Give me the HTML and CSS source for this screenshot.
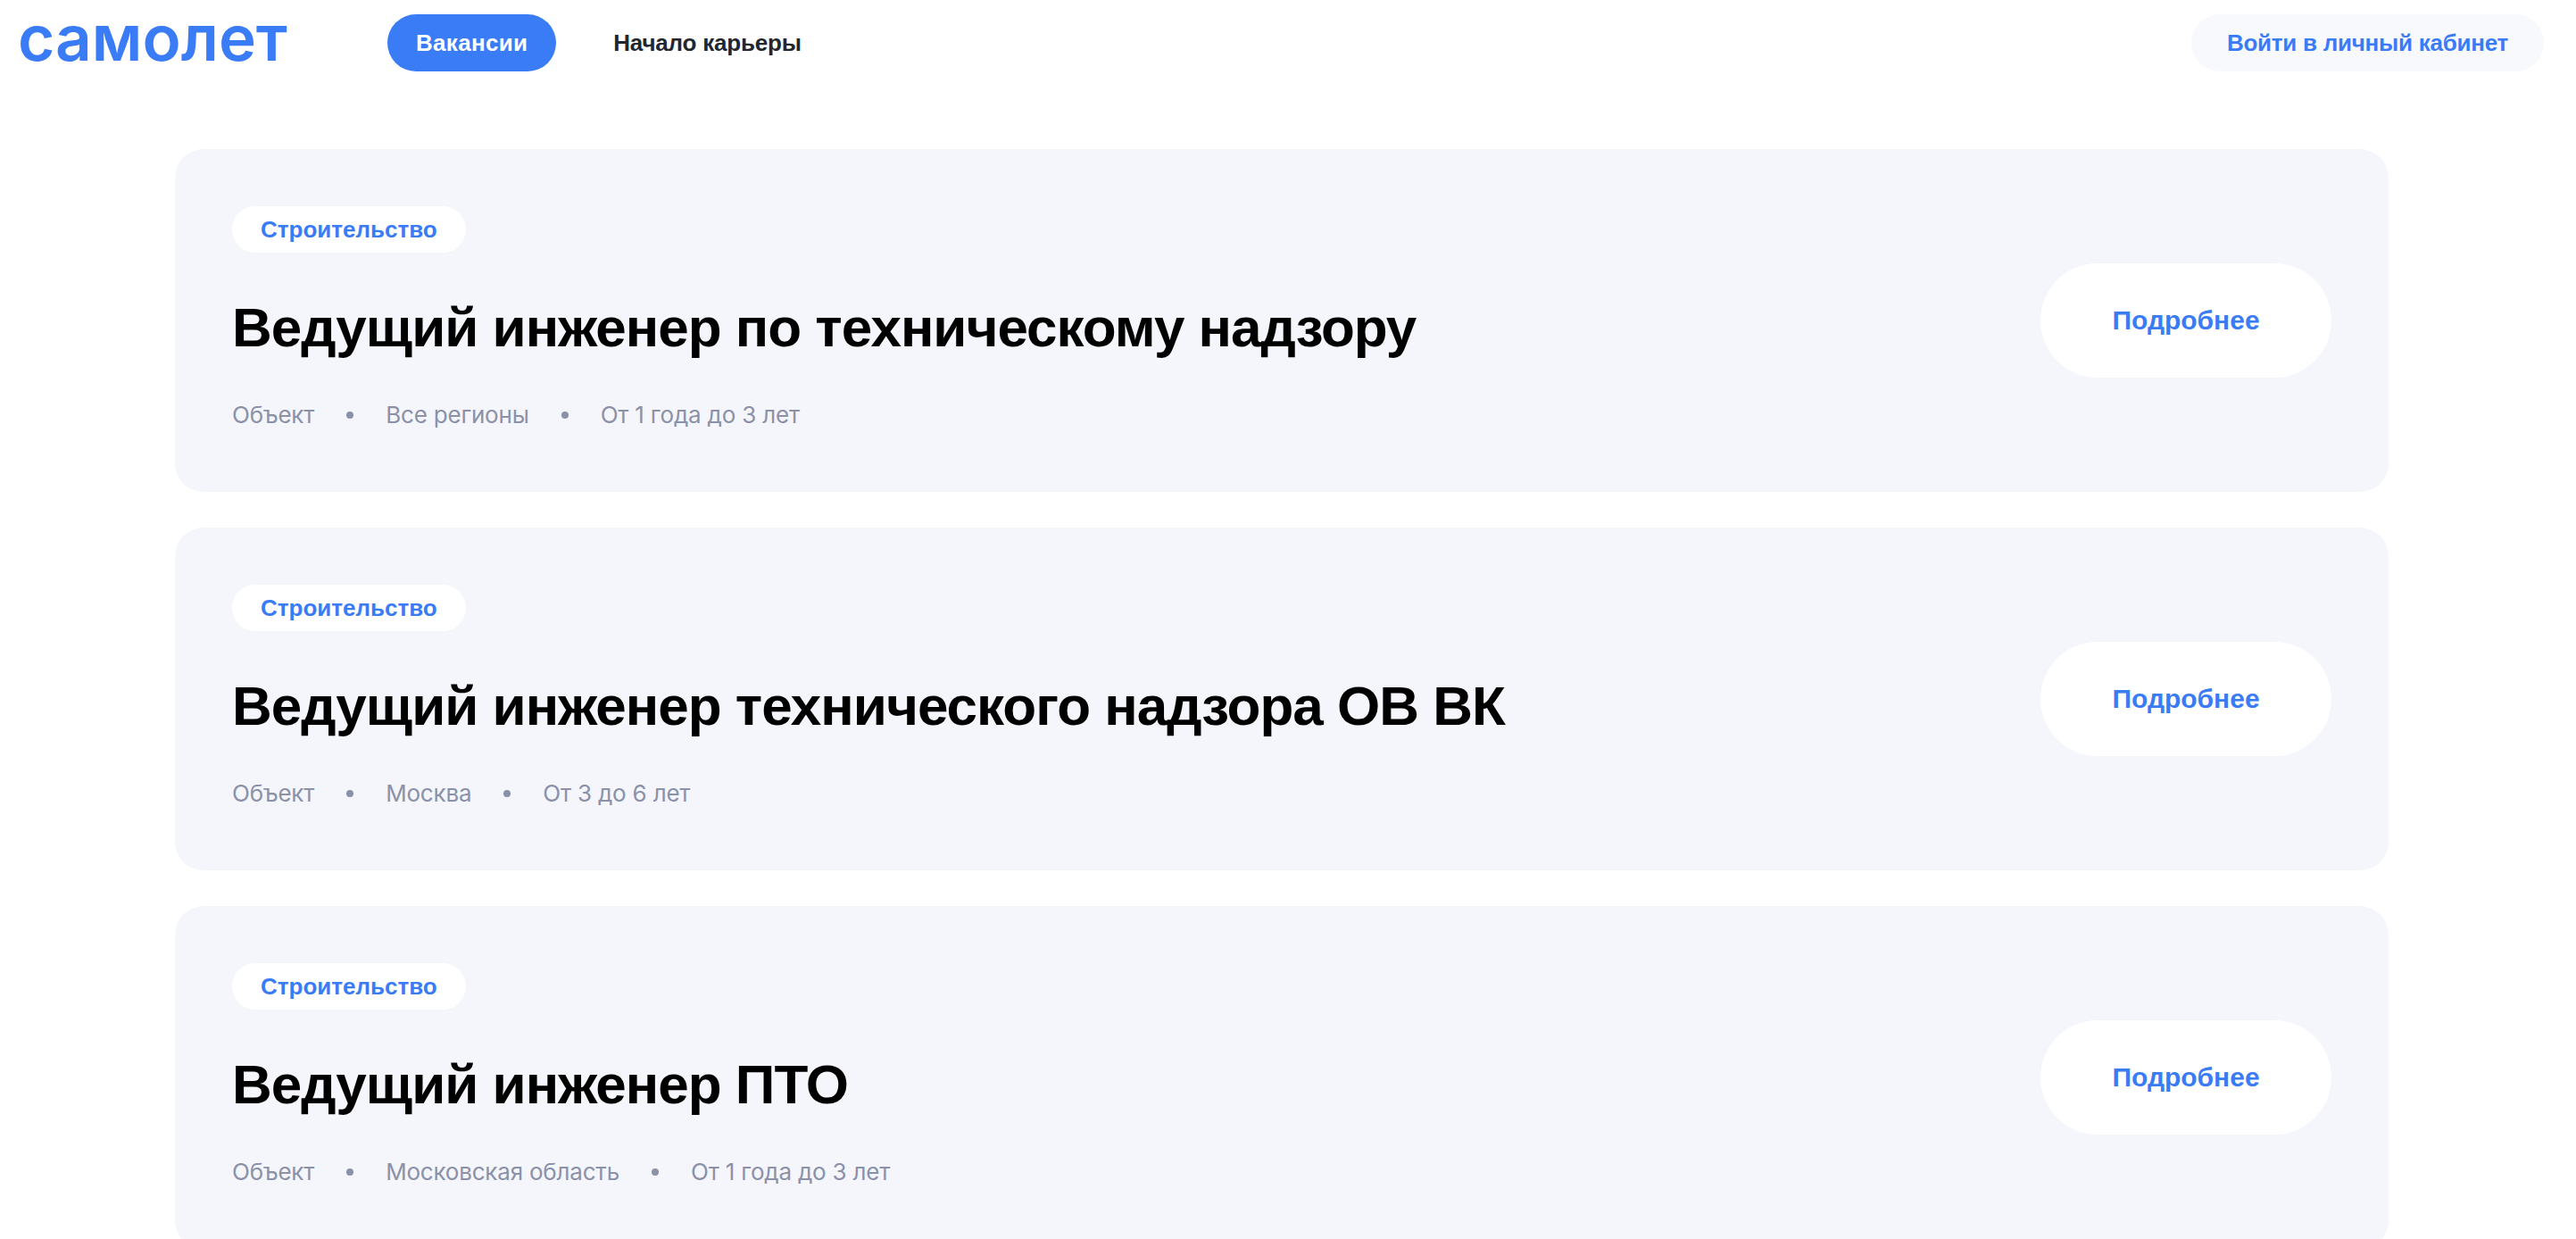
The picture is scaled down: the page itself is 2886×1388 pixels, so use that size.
FILE: index.html
```html
<!DOCTYPE html>
<html lang="ru">
<head>
	<meta charset="UTF-8">
	<title>Вакансии</title>
	<link rel="stylesheet" href="styles.css">
</head>
<body>
	<header class="header">
		<a class="logo">самолет</a>
		<nav class="nav">
			<a class="nav-item current">Вакансии</a>
			<a class="nav-item">Начало карьеры</a>
		</nav>
		<a class="login">Войти в личный кабинет</a>
	</header>
	<main class="list">
		<section class="card">
			<div class="card-info">
				<span class="tag">Строительство</span>
				<h2 class="title">Ведущий инженер по техническому надзору</h2>
				<ul class="meta">
					<li>Объект</li>
					<li class="dot"></li>
					<li>Все регионы</li>
					<li class="dot"></li>
					<li>От 1 года до 3 лет</li>
				</ul>
			</div>
			<a class="more">Подробнее</a>
		</section>
		<section class="card">
			<div class="card-info">
				<span class="tag">Строительство</span>
				<h2 class="title">Ведущий инженер технического надзора ОВ ВК</h2>
				<ul class="meta">
					<li>Объект</li>
					<li class="dot"></li>
					<li>Москва</li>
					<li class="dot"></li>
					<li>От 3 до 6 лет</li>
				</ul>
			</div>
			<a class="more">Подробнее</a>
		</section>
		<section class="card">
			<div class="card-info">
				<span class="tag">Строительство</span>
				<h2 class="title">Ведущий инженер ПТО</h2>
				<ul class="meta">
					<li>Объект</li>
					<li class="dot"></li>
					<li>Московская область</li>
					<li class="dot"></li>
					<li>От 1 года до 3 лет</li>
				</ul>
			</div>
			<a class="more">Подробнее</a>
		</section>
	</main>
</body>
</html>
```

FILE: styles.css
```css
/*css reset*/
html,body,div,ul,li,h2,main,header,nav,section{
	padding: 0;
	margin: 0;
}
html,body{
	height: 100%;
	overflow: hidden;
}
body{
	background: #fff;
	font-family: "Liberation Sans", Arial, sans-serif;
}
ul{list-style-type: none;}

/*header*/
.header{
	display: flex;
	align-items: center;
	padding: 16px 36px 0 20px;
}
.logo{
	align-self: flex-start;
	width: 414px;
	font-family: Inter, "Liberation Sans", sans-serif;
	font-size: 71px;
	font-weight: 600;
	line-height: 52px;
	color: #3a7bf6;
}
.nav{
	display: flex;
	flex: 1;
}
.nav-item{
	height: 64px;
	line-height: 64px;
	padding: 0 32px;
	border-radius: 32px;
	font-size: 26px;
	font-weight: 700;
	letter-spacing: -0.2px;
	color: #22262f;
}
.nav-item.current{
	background: #3a7bf6;
	color: #fff;
	letter-spacing: 0.3px;
	margin-right: 32px;
}
.login{
	height: 64px;
	line-height: 64px;
	padding: 0 40px;
	border-radius: 32px;
	background: #f8f9fd;
	font-size: 26px;
	font-weight: 700;
	letter-spacing: -0.25px;
	color: #3a7bf6;
}

/*cards*/
.list{
	display: flex;
	flex-direction: column;
	gap: 40px;
	padding: 87px 210px 0 196px;
}
.card{
	display: flex;
	flex: none;
	justify-content: space-between;
	height: 384px;
	box-sizing: border-box;
	padding: 64px;
	background: #f4f6fb;
	border-radius: 32px;
}
.tag{
	display: inline-block;
	height: 52px;
	line-height: 52px;
	padding: 0 32px;
	border-radius: 26px;
	background: #fff;
	font-size: 26px;
	font-weight: 700;
	color: #3a7bf6;
}
.title{
	margin-top: 44px;
	font-size: 62px;
	line-height: 80px;
	font-weight: 700;
	letter-spacing: -1px;
	color: #000;
}
.meta{
	display: flex;
	align-items: center;
	gap: 36px;
	margin-top: 38px;
	font-family: Inter, "Liberation Sans", sans-serif;
	font-size: 26px;
	line-height: 40px;
	letter-spacing: -0.2px;
	color: #8b91a8;
}
.dot{
	width: 8px;
	height: 8px;
	border-radius: 50%;
	background: #8b91a8;
}
.more{
	align-self: center;
	width: 326px;
	height: 128px;
	line-height: 128px;
	text-align: center;
	border-radius: 64px;
	background: #fff;
	font-size: 30px;
	font-weight: 700;
	color: #3a7bf6;
}
```
